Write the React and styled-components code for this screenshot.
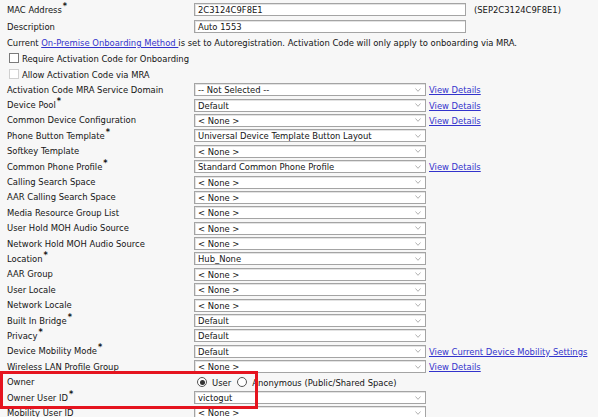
import styled, { createGlobalStyle } from 'styled-components'

const GlobalStyle = createGlobalStyle`
  html, body {
    margin: 0;
    padding: 0;
    background: #f7f7f7;
  }
  body {
    font-family: "DejaVu Sans Condensed", "DejaVu Sans", sans-serif;
    font-size: 9.35px;
    color: #141414;
  }
`

const Page = styled.div`
  position: relative;
  box-sizing: border-box;
  height: 417px;
  overflow: hidden;
  padding: 1px 0 0 7px;
`

const Row = styled.div`
  display: grid;
  grid-template-columns: 187px max-content;
  align-items: center;
  height: ${p => p.$h || 15.4}px;
`

const Label = styled.div`
  white-space: nowrap;
  margin-top: -1px;
`

const Req = styled.span`
  font-size: 9px;
  font-weight: bold;
  vertical-align: top;
  position: relative;
  top: -2px;
  margin-left: 1px;
  line-height: 1;
`

const Field = styled.div`
  display: flex;
  align-items: center;
  white-space: nowrap;
`

const Select = styled.div`
  box-sizing: border-box;
  width: ${p => p.$w || 232}px;
  height: 13px;
  padding: 0 4px 0 3px;
  display: flex;
  align-items: center;
  justify-content: space-between;
  background: #fff;
  border: 1px solid #a4a4a4;
  box-shadow: inset 1px 1px 0 #e3e3e3;
`

const Link = styled.a`
  color: #3333cc;
  text-decoration: underline;
  margin-left: ${p => p.$ml ?? 3}px;
  cursor: pointer;
`

const Note = styled.span`
  margin-left: 8px;
`

const TextLine = styled.div`
  display: flex;
  align-items: center;
  height: ${p => p.$h}px;
  white-space: pre;
`

const CheckRow = styled.div`
  display: flex;
  align-items: center;
  height: 16px;
  padding-left: 2px;
`

const CheckBox = styled.span`
  box-sizing: border-box;
  width: 10px;
  height: 10px;
  margin-right: 3px;
  background: #fff;
  border: 1px solid ${p => (p.$disabled ? '#d0d0d0' : '#7a7a7a')};
`

const Radio = styled.span`
  box-sizing: border-box;
  width: 10px;
  height: 10px;
  border-radius: 50%;
  margin: 0 5px 0 ${p => p.$ml}px;
  background: #fff;
  border: 1px solid #555;
  display: flex;
  align-items: center;
  justify-content: center;
  &::after {
    content: '';
    width: 5px;
    height: 5px;
    border-radius: 50%;
    background: ${p => (p.$on ? '#333' : 'transparent')};
  }
`

const Highlight = styled.div`
  position: absolute;
  left: 0;
  top: 371px;
  width: 258px;
  height: 38px;
  box-sizing: border-box;
  border: 3px solid #e5141f;
  pointer-events: none;
`

function Chevron() {
  return (
    <svg width="6" height="4" viewBox="0 0 6 4">
      <polyline points="0.5,0.5 3,3.3 5.5,0.5" fill="none" stroke="#a8a8a8" strokeWidth="0.9" />
    </svg>
  )
}

const rows = [
  ['Activation Code MRA Service Domain', false, '-- Not Selected --', 'View Details'],
  ['Device Pool', true, 'Default', 'View Details'],
  ['Common Device Configuration', false, '< None >', 'View Details'],
  ['Phone Button Template', true, 'Universal Device Template Button Layout'],
  ['Softkey Template', false, '< None >'],
  ['Common Phone Profile', true, 'Standard Common Phone Profile', 'View Details'],
  ['Calling Search Space', false, '< None >'],
  ['AAR Calling Search Space', false, '< None >'],
  ['Media Resource Group List', false, '< None >'],
  ['User Hold MOH Audio Source', false, '< None >'],
  ['Network Hold MOH Audio Source', false, '< None >'],
  ['Location', true, 'Hub_None'],
  ['AAR Group', false, '< None >'],
  ['User Locale', false, '< None >'],
  ['Network Locale', false, '< None >'],
  ['Built In Bridge', true, 'Default'],
  ['Privacy', true, 'Default'],
  ['Device Mobility Mode', true, 'Default', 'View Current Device Mobility Settings'],
  ['Wireless LAN Profile Group', false, '< None >', 'View Details'],
]

function SelectRow({ label, req, value, link }) {
  return (
    <Row>
      <Label>
        {label}
        {req && <Req>*</Req>}
      </Label>
      <Field>
        <Select>
          <span>{value}</span>
          <Chevron />
        </Select>
        {link && <Link>{link}</Link>}
      </Field>
    </Row>
  )
}

export default function App() {
  return (
    <>
      <GlobalStyle />
      <Page>
        <Row $h={17}>
          <Label>MAC Address<Req>*</Req></Label>
          <Field>
            <Select $w={272}>2C3124C9F8E1</Select>
            <Note>(SEP2C3124C9F8E1)</Note>
          </Field>
        </Row>
        <Row $h={17}>
          <Label>Description</Label>
          <Field>
            <Select $w={272}>Auto 1553</Select>
          </Field>
        </Row>
        <TextLine $h={15}>
          Current <Link $ml={0}>On-Premise Onboarding Method </Link>is set to Autoregistration. Activation Code will only apply to onboarding via MRA.
        </TextLine>
        <CheckRow>
          <CheckBox />
          Require Activation Code for Onboarding
        </CheckRow>
        <CheckRow>
          <CheckBox $disabled />
          Allow Activation Code via MRA
        </CheckRow>
        {rows.map(([label, req, value, link]) => (
          <SelectRow key={label} label={label} req={req} value={value} link={link} />
        ))}
        <Row>
          <Label>Owner</Label>
          <Field>
            <Radio $on $ml={3} />
            User
            <Radio $ml={6} />
            Anonymous (Public/Shared Space)
          </Field>
        </Row>
        <SelectRow label="Owner User ID" req value="victogut" />
        <SelectRow label="Mobility User ID" value="< None >" />
        <Highlight />
      </Page>
    </>
  )
}
